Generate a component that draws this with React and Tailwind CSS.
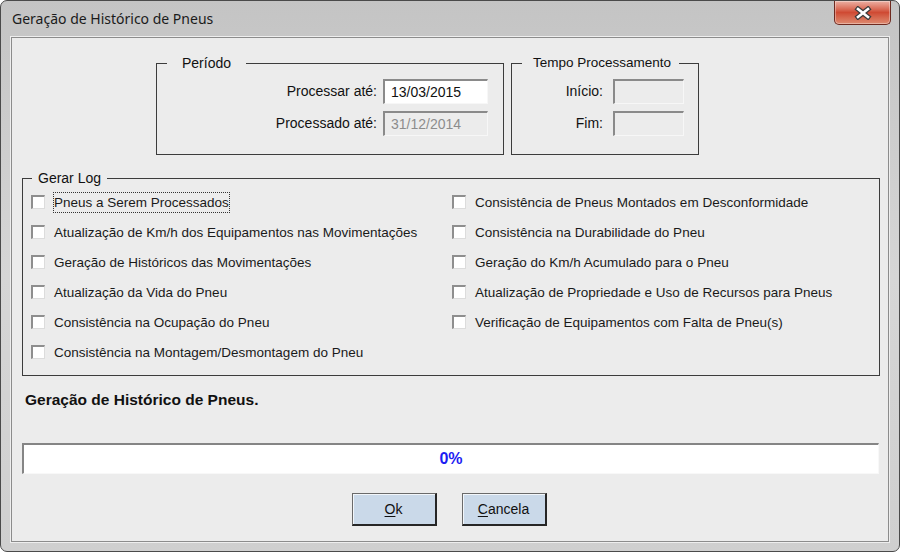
const labelFont = { fontFamily: '"Liberation Sans", Arial, sans-serif' };

function Fieldset({ title, legendClass, className, children }) {
  return (
    <fieldset className={`border border-[#3c3c3c] ${className}`}>
      <legend className={`text-[14px] leading-[16px] text-[#111] whitespace-nowrap ${legendClass}`}>{title}</legend>
      {children}
    </fieldset>
  );
}

function Field({ label, value, disabled, labelGap, inputW }) {
  return (
    <div className="flex items-center" style={{ gap: labelGap }}>
      <span className="text-[14px] text-[#111]">{label}</span>
      <div
        className={`h-[25px] flex items-center pl-[6px] border-t-2 border-l-2 border-b border-r border-t-[#8a8a8a] border-l-[#8a8a8a] border-b-[#f7f7f7] border-r-[#f7f7f7] text-[14px] ${
          disabled ? "bg-[#ececec] text-[#8c8c8c]" : "bg-white text-[#111]"
        }`}
        style={{ width: inputW }}
      >
        {value}
      </div>
    </div>
  );
}

function Check({ label, focused }) {
  return (
    <div className="h-[30px] flex items-center gap-[8px]">
      <div className="w-[14px] h-[14px] bg-white border-t-2 border-l-2 border-b border-r border-t-[#8e8e8e] border-l-[#8e8e8e] border-b-[#dcdcdc] border-r-[#dcdcdc]" />
      <span
        className={`text-[13.5px] leading-[19px] border text-[#1a1a1a] ${
          focused ? "border-dotted border-[#333]" : "border-transparent"
        }`}
      >
        {label}
      </span>
    </div>
  );
}

export default function App() {
  const left = [
    "Pneus a Serem Processados",
    "Atualização de Km/h dos Equipamentos nas Movimentações",
    "Geração de Históricos das Movimentações",
    "Atualização da Vida do Pneu",
    "Consistência na Ocupação do Pneu",
    "Consistência na Montagem/Desmontagem do Pneu",
  ];
  const right = [
    "Consistência de Pneus Montados em Desconformidade",
    "Consistência na Durabilidade do Pneu",
    "Geração do Km/h Acumulado para o Pneu",
    "Atualização de Propriedade e Uso de Recursos para Pneus",
    "Verificação de Equipamentos com Falta de Pneu(s)",
  ];

  return (
    <div className="w-[900px] h-[552px] bg-white overflow-hidden">
      <div className="w-[900px] h-[552px] rounded-[7px] border border-[#4a4a4a] bg-gradient-to-b from-[#c4c4c4] via-[#d6d6d6] to-[#cfcfcf] flex flex-col px-[10px] pb-[9px]">
        {/* Title bar */}
        <div className="h-[36px] flex items-start justify-between">
          <span
            className="mt-[8px] ml-[1px] text-[14px] leading-[20px] text-[#1b1b1b]"
            style={{ fontFamily: '"Noto Sans", "Open Sans", sans-serif' }}
          >
            Geração de Histórico de Pneus
          </span>
          <div className="w-[57px] h-[24px] mr-[-2px] rounded-b-[5px] border border-t-0 border-[#6e2a20] bg-gradient-to-b from-[#eab0a4] via-[#cf4a33] to-[#dd8a70] flex items-center justify-center shadow-[inset_0_0_0_1px_rgba(255,255,255,0.35)]">
            <svg width="18" height="14" viewBox="0 0 18 14">
              <path d="M4 3 L14 11 M14 3 L4 11" stroke="#3b3b3b" strokeWidth="5" strokeLinecap="square" />
              <path d="M4 3 L14 11 M14 3 L4 11" stroke="#ffffff" strokeWidth="2.6" strokeLinecap="square" />
            </svg>
          </div>
        </div>

        {/* Client area */}
        <div
          className="flex-1 bg-[#ececec] border border-[#8c8c8c] shadow-[0_0_0_1px_#eeeeee] flex flex-col pt-[17px]"
          style={labelFont}
        >
          <div className="flex pl-[144px] gap-[7px]">
            <Fieldset
              title="Período"
              legendClass="ml-[10px] px-[15px]"
              className="w-[348px] h-[100px] flex flex-col items-end pr-[15px] pt-[8px] gap-[7px]"
            >
              <Field label="Processar até:" value="13/03/2015" labelGap="6px" inputW="105px" />
              <Field label="Processado até:" value="31/12/2014" disabled labelGap="6px" inputW="105px" />
            </Fieldset>
            <Fieldset
              title="Tempo Processamento"
              legendClass="ml-[10px] pl-[11px] pr-[8px] !text-[13.5px]"
              className="w-[188px] h-[100px] flex flex-col items-end pr-[14px] pt-[8px] gap-[7px]"
            >
              <Field label="Início:" value="" disabled labelGap="10px" inputW="71px" />
              <Field label="Fim:" value="" disabled labelGap="10px" inputW="71px" />
            </Fieldset>
          </div>

          <div className="pl-[10px] mt-[15px]">
            <Fieldset
              title="Gerar Log"
              legendClass="ml-[1px] px-[6px]"
              className="w-[858px] h-[206px] flex pl-[8px] pt-[1px]"
            >
              <div className="w-[421px] flex flex-col">
                {left.map((t, i) => (
                  <Check key={t} label={t} focused={i === 0} />
                ))}
              </div>
              <div className="flex flex-col">
                {right.map((t) => (
                  <Check key={t} label={t} />
                ))}
              </div>
            </Fieldset>
          </div>

          <p className="mt-[16px] pl-[13px] text-[15.5px] leading-[16px] font-bold text-[#111]">
            Geração de Histórico de Pneus.
          </p>

          <div className="ml-[10px] mt-[35px] w-[857px] h-[31px] bg-white border-t-2 border-l-2 border-b border-r border-t-[#858585] border-l-[#858585] border-b-[#f8f8f8] border-r-[#f8f8f8] flex items-center justify-center">
            <span className="text-[16px] font-bold text-[#1c1cf2]">0%</span>
          </div>

          <div className="mt-[19px] flex justify-center gap-[25px] pr-[2px]">
            <button className="w-[85px] h-[33px] bg-[#cad9e9] border border-[#6a6a6a] border-b-2 border-r-2 border-b-[#262626] border-r-[#262626] shadow-[inset_1px_1px_0_#f2f6fa] text-[14px] text-[#111]">
              <span className="underline underline-offset-2">O</span>k
            </button>
            <button className="w-[85px] h-[33px] bg-[#cad9e9] border border-[#6a6a6a] border-b-2 border-r-2 border-b-[#262626] border-r-[#262626] shadow-[inset_1px_1px_0_#f2f6fa] text-[14px] text-[#111]">
              <span className="underline underline-offset-2">C</span>ancela
            </button>
          </div>
        </div>
      </div>
    </div>
  );
}
